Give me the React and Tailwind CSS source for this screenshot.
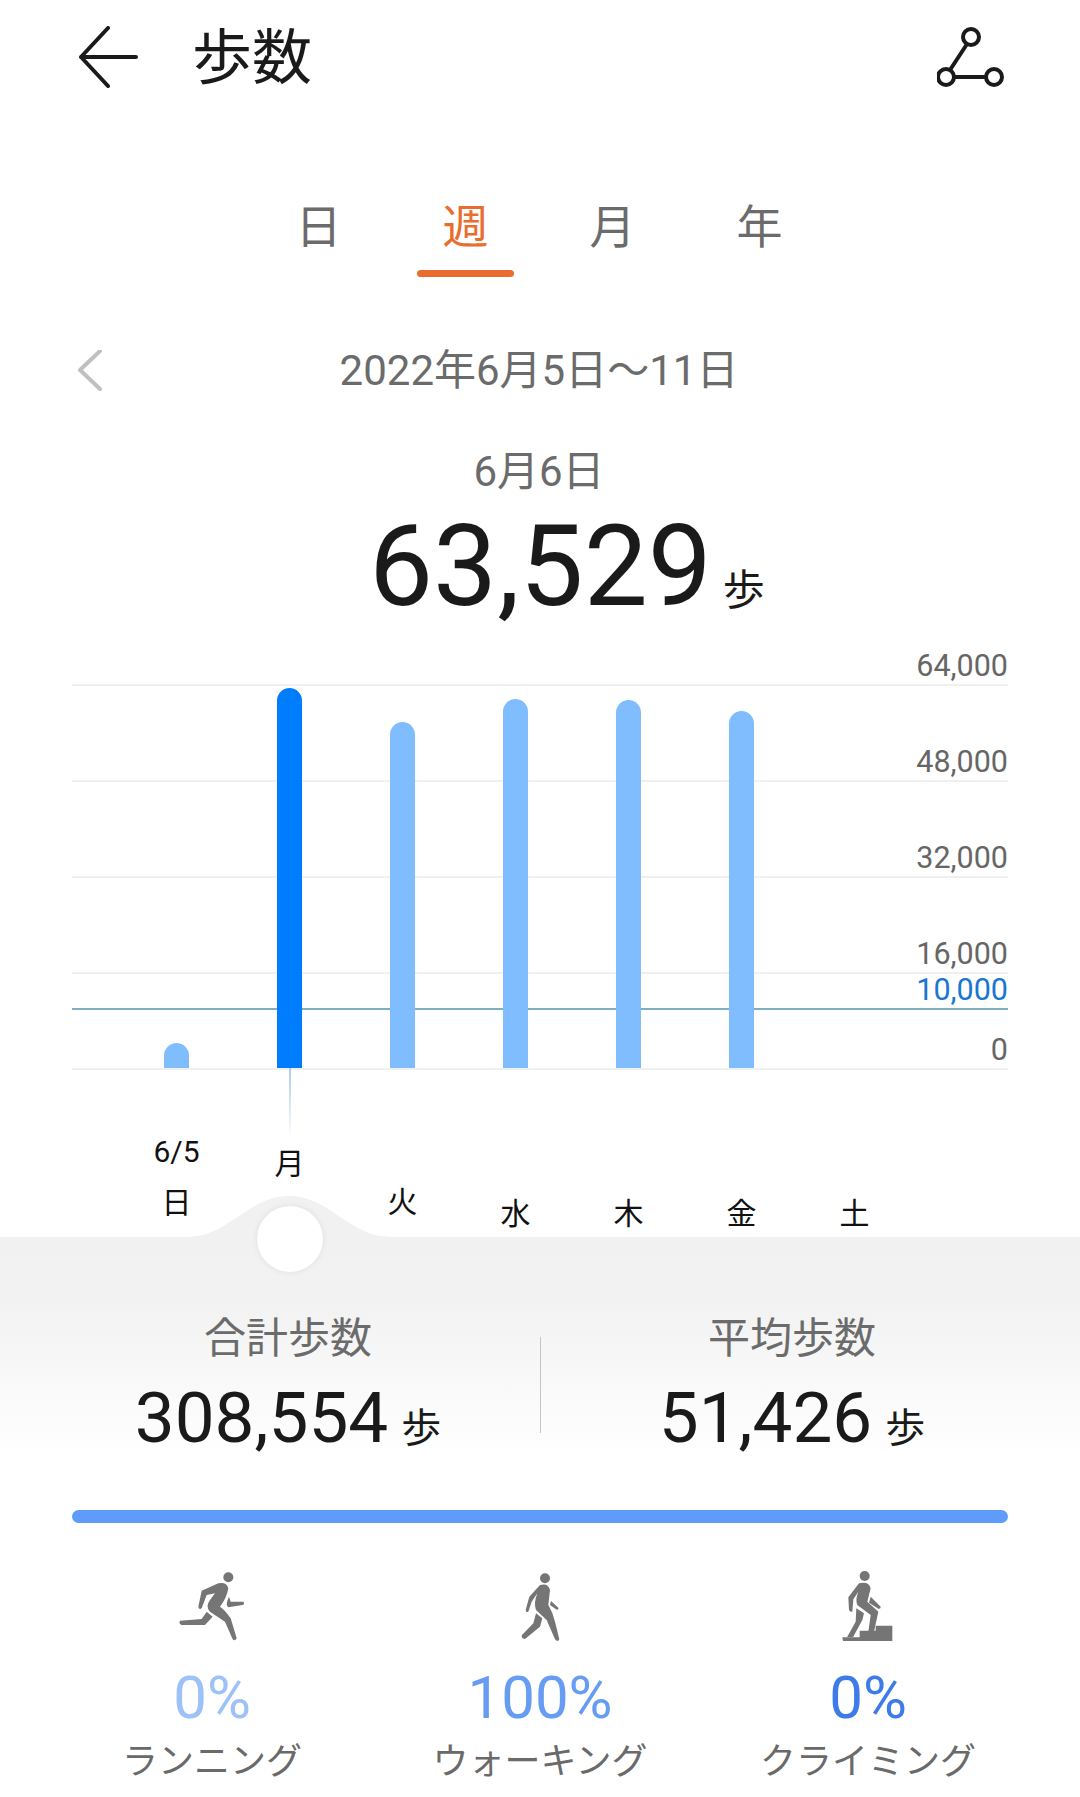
import React from "react";

const Bars = [
  { h: "h-[25px]", c: "bg-[#80bdff]" },
  { h: "h-[380px]", c: "bg-[#007dff]" },
  { h: "h-[346px]", c: "bg-[#80bdff]" },
  { h: "h-[369px]", c: "bg-[#80bdff]" },
  { h: "h-[368px]", c: "bg-[#80bdff]" },
  { h: "h-[357px]", c: "bg-[#80bdff]" },
  { h: "h-0", c: "" },
];

const days = [
  { t: "日", top: "6/5", pt: "pt-[66px]" },
  { t: "月", line: true, pt: "" },
  { t: "火", pt: "pt-[116px]" },
  { t: "水", pt: "pt-[128px]" },
  { t: "木", pt: "pt-[128px]" },
  { t: "金", pt: "pt-[128px]" },
  { t: "土", pt: "pt-[128px]" },
];

const axis = [
  { v: "64,000", h: "h-[46px]" },
  { v: "48,000", h: "h-[96px]" },
  { v: "32,000", h: "h-[96px]" },
  { v: "16,000", h: "h-[96px]" },
  { v: "0", h: "h-[96px]" },
];

function RunIcon() {
  return (
    <svg className="ml-[16px]" width="120" height="100" viewBox="0 0 360 300" fill="#757575">
      <circle cx="205" cy="52" r="15" />
      <path d="M125 92 L175 70 Q200 65 205 85 Q200 115 180 140 Q195 150 212 175 L230 235 Q225 245 218 238 L195 185 L150 155 Q135 140 150 120 L165 100 L140 105 L125 145 Q117 150 115 140 Z" />
      <path d="M60 182 L125 177 L140 155 L158 170 L135 195 L65 195 Q55 190 60 182 Z" />
      <path d="M207 110 L212 125 L250 125 Q255 132 248 135 L205 142 Q195 135 207 110 Z" />
    </svg>
  );
}

function WalkIcon() {
  return (
    <svg width="100" height="100" viewBox="0 0 300 300" fill="#757575">
      <circle cx="165" cy="55" r="15" />
      <path d="M150 75 Q175 68 180 90 L175 135 Q190 160 195 185 L208 238 Q203 248 195 238 L170 180 L138 150 Q130 130 142 100 L125 125 L115 155 Q107 158 107 150 L118 110 Z" />
      <path d="M138 160 L157 175 L150 200 L105 237 Q92 235 96 225 L130 190 Z" />
      <path d="M183 123 L205 143 Q207 152 198 148 L180 135 Z" />
    </svg>
  );
}

function ClimbIcon() {
  return (
    <svg className="ml-[2px]" width="100" height="100" viewBox="0 0 300 300" fill="#757575">
      <circle cx="137" cy="48" r="15" />
      <path d="M120 70 Q150 62 155 85 L145 125 L178 155 L165 215 L148 215 L155 165 L115 135 Q108 120 118 95 L103 118 L100 155 Q93 157 90 150 L88 112 Z" />
      <path d="M112 145 L135 160 L130 180 L102 232 L84 232 L110 185 Z" />
      <path d="M155 110 L185 140 Q185 148 178 146 L150 128 Z" />
      <path d="M70 232 L122 232 L122 212 L170 212 L170 197 L220 197 L220 243 L72 243 Z" />
    </svg>
  );
}

const modes = [
  { Icon: RunIcon, pct: "0%", color: "text-[#9cc2f7]", label: "ランニング" },
  { Icon: WalkIcon, pct: "100%", color: "text-[#669df2]", label: "ウォーキング" },
  { Icon: ClimbIcon, pct: "0%", color: "text-[#3c7be8]", label: "クライミング" },
];

function Stat({ label, value }) {
  return (
    <div className="w-[432px] flex flex-col items-center">
      <div className="text-[42px] leading-[56px] text-[#6b6b6b] translate-y-[1px]">{label}</div>
      <div className="mt-[12px] h-[80px] flex items-baseline">
        <span className="text-[71px] leading-[80px] text-[#1a1a1a]">{value}</span>
        <span className="ml-[13px] text-[40px] leading-[80px] text-[#1a1a1a]">歩</span>
      </div>
    </div>
  );
}

export default function App() {
  return (
    <div className="w-[1080px] h-[1797px] overflow-hidden bg-white font-['Roboto','Noto_Sans_CJK_JP',sans-serif]">
      <header className="h-[114px] flex items-center pl-[78px] pr-[76px]">
        <svg width="60" height="62" viewBox="0 0 60 62" fill="none" stroke="#1a1a1a" strokeWidth="4" strokeLinecap="round" strokeLinejoin="round">
          <path d="M58 31 H3 M30 2 L3 31 L30 60" />
        </svg>
        <h1 className="ml-[54px] text-[60px] leading-[70px] text-[#1a1a1a] font-normal translate-y-[2px]">歩数</h1>
        <svg className="ml-auto" width="67" height="62" viewBox="0 0 67 62" fill="none" stroke="#1a1a1a" strokeWidth="4">
          <circle cx="34" cy="11" r="8" />
          <circle cx="9" cy="51" r="8" />
          <circle cx="57" cy="51" r="8" />
          <path d="M30 18 L13 44 M17 51 H49" />
        </svg>
      </header>

      <nav className="flex pl-[245px]">
        {["日", "週", "月", "年"].map((t, i) => (
          <div key={t} className="w-[147px] flex flex-col items-center pt-[85px]">
            <div className={`text-[46px] leading-[56px] ${i === 1 ? "text-[#e96d2e]" : "text-[#6b6b6b]"}`}>{t}</div>
            <div className={`mt-[15px] w-[97px] h-[7px] rounded-full ${i === 1 ? "bg-[#e96d2e]" : ""}`} />
          </div>
        ))}
      </nav>

      <div className="mt-[72px] h-[44px] grid grid-cols-[1fr_auto_1fr] items-center pl-[78px] pr-[72px]">
        <svg width="24" height="42" viewBox="0 0 24 42" fill="none" stroke="#c0c0c0" strokeWidth="4" strokeLinecap="round" strokeLinejoin="round">
          <path d="M22 1 L2 20 L22 39" />
        </svg>
        <div className="text-[42px] leading-[44px] text-[#6b6b6b] -ml-[8px]">2022年6月5日～11日</div>
        <div />
      </div>

      <div className="mt-[55px] text-center text-[42px] leading-[48px] text-[#6b6b6b] -translate-x-[1px]">6月6日</div>

      <div className="mt-[10px] pl-[369px] h-[120px] flex items-baseline">
        <span className="text-[114px] leading-[120px] text-[#1a1a1a]">63,529</span>
        <span className="ml-[11px] text-[42px] leading-[120px] text-[#1a1a1a]">歩</span>
      </div>

      <section className="mt-[14px] mx-[72px] h-[597px] relative">
        <div className="absolute inset-x-0 top-0">
          {axis.map((a) => (
            <div key={a.v} className={`${a.h} box-border border-b-2 border-[#f0f0f0] flex items-end justify-end text-[30.5px] leading-[36px] text-[#666666]`}>
              {a.v}
            </div>
          ))}
          <div className="absolute right-0 top-[332px] w-full h-[36px] border-b-2 border-[#7fadc4] box-content flex items-end justify-end text-[30.5px] leading-[36px] text-[#1976d2]">
            10,000
          </div>
        </div>
        <div className="relative flex pl-[48px]">
          {days.map((d, i) => (
            <div key={d.t} className="w-[113px] flex flex-col items-center">
              <div className="h-[428px] flex items-end">
                <div className={`w-[25px] rounded-t-full ${Bars[i].h} ${Bars[i].c}`} />
              </div>
              <div className={`flex flex-col items-center text-[30px] text-[#111111] ${d.pt}`}>
                {d.top && <div className="leading-[36px]">{d.top}</div>}
                {d.line && <div className="w-[2px] h-[70px] bg-gradient-to-b from-[#a8cdeb] to-transparent" />}
                <div className={`leading-[36px] ${d.top ? "mt-[15px]" : ""} ${d.line ? "mt-[8px]" : ""}`}>{d.t}</div>
              </div>
            </div>
          ))}
        </div>
      </section>

      <section className="relative h-[219px] pt-[73px] flex justify-between px-[72px] bg-gradient-to-b from-[#f1f1f1] via-[#f2f2f2] via-30% to-white">
        <svg className="absolute left-[184px] -top-[41px]" width="210" height="42" viewBox="0 0 210 42" fill="#f1f1f1">
          <path d="M0 41 C24 41 36 32 49 24 C61 17 79 0 105 0 C131 0 149 17 161 24 C174 32 186 41 210 41 V42 H0 Z" />
        </svg>
        <div className="absolute left-[257px] -top-[31px] w-[66px] h-[66px] rounded-full bg-white shadow-[0_0_6px_rgba(0,0,0,0.08)]" />
        <Stat label="合計歩数" value="308,554" />
        <div className="w-px h-[96px] mt-[27px] bg-[#c4c4c4]" />
        <Stat label="平均歩数" value="51,426" />
      </section>

      <div className="mt-[54px] mx-[72px] h-[13px] rounded-full bg-[#5f9bfb]" />

      <section className="mt-[43px] mx-[48px] grid grid-cols-3">
        {modes.map(({ Icon, pct, color, label }) => (
          <div key={label} className="flex flex-col items-center">
            <div className="h-[100px] -mt-[6px] -mb-[14px] flex items-center justify-center">
              <Icon />
            </div>
            <div className={`mt-[17px] text-[60px] leading-[70px] ${color}`}>{pct}</div>
            <div className="mt-[7px] text-[36px] leading-[44px] text-[#6a6a6a]">{label}</div>
          </div>
        ))}
      </section>
    </div>
  );
}
